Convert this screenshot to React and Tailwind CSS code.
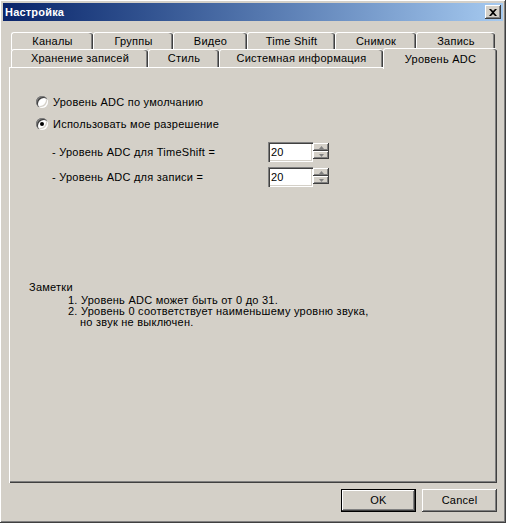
import React from 'react';

const raised =
  'shadow-[inset_-1px_-1px_#404040,inset_1px_1px_#ffffff,inset_-2px_-2px_#808080,inset_2px_2px_#d4d0c8]';
const sunken =
  'shadow-[inset_1px_1px_#808080,inset_2px_2px_#404040,inset_-1px_-1px_#ffffff,inset_-2px_-2px_#d4d0c8]';

const row1 = [
  ['Каналы', 82],
  ['Группы', 80],
  ['Видео', 74],
  ['Time Shift', 88],
  ['Снимок', 81],
  ['Запись', 79],
];

const row2 = [
  ['Хранение записей', 137],
  ['Стиль', 71],
  ['Системная информация', 164],
];

const Tab = ({ label, width }) => (
  <div
    style={{ width }}
    className="h-[18px] flex items-center justify-center border-l border-t border-white rounded-t-[3px] shadow-[inset_-1px_0_#404040,inset_-2px_0_#808080] bg-[#d4d0c8]"
  >
    {label}
  </div>
);

const Radio = ({ checked }) => (
  <div className={`w-[12px] h-[12px] rounded-full bg-white flex items-center justify-center ${sunken}`}>
    {checked && <div className="w-[4px] h-[4px] rounded-full bg-black" />}
  </div>
);

const Spin = () => (
  <div className="flex flex-col mt-[1px]">
    {['up', 'down'].map((d) => (
      <div key={d} className={`w-[16px] h-[8px] bg-[#d4d0c8] flex items-center justify-center ${raised}`}>
        <svg width="5" height="3" viewBox="0 0 5 3">
          {d === 'up' ? (
            <polygon points="2.5,0 5,3 0,3" fill="#808080" />
          ) : (
            <polygon points="0,0 5,0 2.5,3" fill="#808080" />
          )}
        </svg>
      </div>
    ))}
  </div>
);

const Field = ({ label }) => (
  <div className="flex h-[20px] items-start">
    <div className="w-[216px] h-[20px] flex items-center">{label}</div>
    <div className={`w-[45px] h-[20px] bg-white flex items-center pl-[3px] ${sunken}`}>20</div>
    <Spin />
  </div>
);

export default function App() {
  return (
    <div
      className={`w-[506px] h-[523px] bg-[#d4d0c8] p-[3px] flex flex-col text-[11px] tracking-[0.25px] text-black ${raised}`}
      style={{ fontFamily: '"Liberation Sans", Arial, sans-serif' }}
    >
      <div className="h-[18px] flex items-center justify-between bg-gradient-to-r from-[#0a246a] to-[#a6caf0] pl-[2px] pr-[2px]">
        <span className="text-white font-bold tracking-[0.2px]">Настройка</span>
        <div className={`w-[16px] h-[14px] bg-[#d4d0c8] flex items-center justify-center ${raised}`}>
          <svg width="8" height="7" viewBox="0 0 8 7">
            <path d="M0 0 L2 0 L4 2 L6 0 L8 0 L5 3.5 L8 7 L6 7 L4 5 L2 7 L0 7 L3 3.5 Z" fill="#000" />
          </svg>
        </div>
      </div>

      <div className="ml-[6px] mt-[11px] w-[488px] flex flex-col">
        <div className="flex pl-[2px]">
          {row1.map(([l, w]) => (
            <Tab key={l} label={l} width={w} />
          ))}
        </div>
        <div className="flex pl-[2px] items-end h-[17px]">
          {row2.map(([l, w]) => (
            <Tab key={l} label={l} width={w} />
          ))}
          <div className="relative z-10 -mb-[2px] w-[114px] h-[21px] flex items-start pt-[2px] justify-center border-l border-t border-white rounded-t-[3px] shadow-[inset_-1px_0_#404040,inset_-2px_0_#808080] bg-[#d4d0c8]">
            Уровень ADC
          </div>
        </div>
        <div className="h-[416px] border-l border-t border-white shadow-[inset_-1px_-1px_#404040,inset_-2px_-2px_#808080] flex flex-col pl-[26px] pt-[23px]">
          <div className="h-[22px] flex items-center gap-[5px]">
            <Radio />
            <span>Уровень ADC по умолчанию</span>
          </div>
          <div className="h-[22px] flex items-center gap-[5px]">
            <Radio checked />
            <span>Использовать мое разрешение</span>
          </div>
          <div className="flex flex-col gap-[5px] mt-[7px] pl-[16px]">
            <Field label="- Уровень ADC для TimeShift =" />
            <Field label="- Уровень ADC для записи =" />
          </div>
          <div className="mt-[94px] -ml-[7px] leading-[12px]">Заметки</div>
          <div className="pl-[32px] leading-[11px] mt-[2px]">
            <div>1. Уровень ADC может быть от 0 до 31.</div>
            <div>2. Уровень 0 соответствует наименьшему уровню звука,</div>
            <div className="pl-[12px]">но звук не выключен.</div>
          </div>
        </div>
      </div>

      <div className="flex justify-end gap-[6px] pr-[6px] mt-[6px]">
        <div className="w-[75px] h-[23px] border border-black flex">
          <div className={`flex-1 flex items-center justify-center ${raised}`}>OK</div>
        </div>
        <div className={`w-[75px] h-[23px] flex items-center justify-center ${raised}`}>Cancel</div>
      </div>
    </div>
  );
}
